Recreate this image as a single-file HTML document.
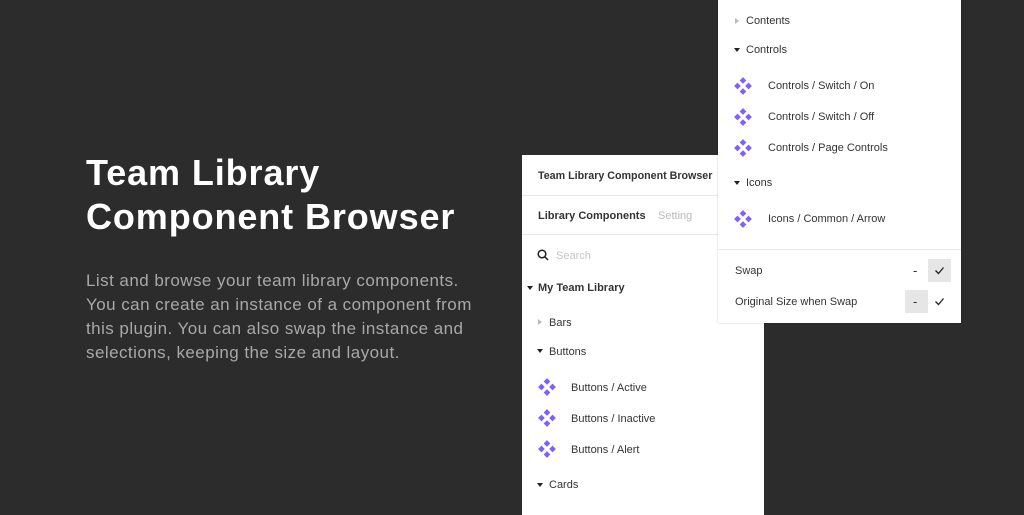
<!DOCTYPE html>
<html><head><meta charset="utf-8"><style>
*{margin:0;padding:0;box-sizing:border-box}
body{width:1024px;height:512px;background:#2c2c2c;font-family:"Liberation Sans",sans-serif;position:relative;overflow:hidden}
.t{position:absolute;left:86px;top:151px;color:#fff;font-size:36px;font-weight:bold;line-height:44px;letter-spacing:0.9px}
.d{position:absolute;left:86px;top:269px;color:#a8a8a8;font-size:17px;line-height:24px;white-space:nowrap;letter-spacing:0.45px}
.p{position:absolute;background:#fff;font-size:11px;color:#333}
.a{position:absolute;white-space:nowrap}
.sep{position:absolute;left:0;right:0;height:1px;background:#e8e8e8}
.tri{position:absolute;width:0;height:0}
.down{border-left:3.5px solid transparent;border-right:3.5px solid transparent;border-top:4px solid #222}
.right{border-top:3.5px solid transparent;border-bottom:3.5px solid transparent;border-left:4px solid #bbb}
.ic{position:absolute;width:20px;height:20px}
</style></head><body>
<div class="t">Team Library<br>Component Browser</div>
<div class="d">List and browse your team library components.<br>You can create an instance of a component from<br>this plugin. You can also swap the instance and<br>selections, keeping the size and layout.</div>

<div class="p" style="left:522px;top:155px;width:242px;height:360px">
<div class="a" style="left:16px;top:15px;font-weight:bold;color:#333;font-size:10.7px">Team Library Component Browser</div>
<div class="sep" style="top:40px"></div>
<div class="a" style="left:16px;top:55px;font-weight:bold;color:#333">Library Components</div>
<div class="a" style="left:136px;top:55px;color:#bbb">Setting</div>
<div class="sep" style="top:79px"></div>
<svg class="a" style="left:15px;top:94px" width="12" height="12" viewBox="0 0 12 12"><circle cx="5" cy="5" r="3.8" fill="none" stroke="#222" stroke-width="1.5"/><path d="M8 8l3 3" stroke="#222" stroke-width="1.5"/></svg>
<div class="a" style="left:34px;top:95px;color:#c4c4c4">Search</div>
<div class="tri down" style="left:5px;top:131px"></div>
<div class="a" style="left:16px;top:127px;font-weight:bold;color:#333">My Team Library</div>
<div class="tri right" style="left:16px;top:164px"></div>
<div class="a" style="left:27px;top:162px">Bars</div>
<div class="tri down" style="left:15px;top:194px"></div>
<div class="a" style="left:27px;top:191px">Buttons</div>
<svg class="ic" style="left:15px;top:222px" viewBox="0 0 18 18"><g fill="#7b61ff"><path d="M9 1l3 3-3 3-3-3z"/><path d="M9 11l3 3-3 3-3-3z"/><path d="M4 6l3 3-3 3-3-3z"/><path d="M14 6l3 3-3 3-3-3z"/></g></svg>
<div class="a" style="left:49px;top:227px">Buttons / Active</div>
<svg class="ic" style="left:15px;top:253px" viewBox="0 0 18 18"><g fill="#7b61ff"><path d="M9 1l3 3-3 3-3-3z"/><path d="M9 11l3 3-3 3-3-3z"/><path d="M4 6l3 3-3 3-3-3z"/><path d="M14 6l3 3-3 3-3-3z"/></g></svg>
<div class="a" style="left:49px;top:258px">Buttons / Inactive</div>
<svg class="ic" style="left:15px;top:284px" viewBox="0 0 18 18"><g fill="#7b61ff"><path d="M9 1l3 3-3 3-3-3z"/><path d="M9 11l3 3-3 3-3-3z"/><path d="M4 6l3 3-3 3-3-3z"/><path d="M14 6l3 3-3 3-3-3z"/></g></svg>
<div class="a" style="left:49px;top:289px">Buttons / Alert</div>
<div class="tri down" style="left:15px;top:328px"></div>
<div class="a" style="left:27px;top:324px">Cards</div>
</div>

<div class="p" style="left:718px;top:-2px;width:243px;height:325px;box-shadow:0 0 2px rgba(0,0,0,.2)">
<div class="tri right" style="left:17px;top:20px"></div>
<div class="a" style="left:28px;top:17px">Contents</div>
<div class="tri down" style="left:16px;top:50px"></div>
<div class="a" style="left:28px;top:46px">Controls</div>
<svg class="ic" style="left:15px;top:78px" viewBox="0 0 18 18"><g fill="#7b61ff"><path d="M9 1l3 3-3 3-3-3z"/><path d="M9 11l3 3-3 3-3-3z"/><path d="M4 6l3 3-3 3-3-3z"/><path d="M14 6l3 3-3 3-3-3z"/></g></svg>
<div class="a" style="left:50px;top:82px">Controls / Switch / On</div>
<svg class="ic" style="left:15px;top:109px" viewBox="0 0 18 18"><g fill="#7b61ff"><path d="M9 1l3 3-3 3-3-3z"/><path d="M9 11l3 3-3 3-3-3z"/><path d="M4 6l3 3-3 3-3-3z"/><path d="M14 6l3 3-3 3-3-3z"/></g></svg>
<div class="a" style="left:50px;top:113px">Controls / Switch / Off</div>
<svg class="ic" style="left:15px;top:140px" viewBox="0 0 18 18"><g fill="#7b61ff"><path d="M9 1l3 3-3 3-3-3z"/><path d="M9 11l3 3-3 3-3-3z"/><path d="M4 6l3 3-3 3-3-3z"/><path d="M14 6l3 3-3 3-3-3z"/></g></svg>
<div class="a" style="left:50px;top:144px">Controls / Page Controls</div>
<div class="tri down" style="left:16px;top:183px"></div>
<div class="a" style="left:28px;top:179px">Icons</div>
<svg class="ic" style="left:15px;top:211px" viewBox="0 0 18 18"><g fill="#7b61ff"><path d="M9 1l3 3-3 3-3-3z"/><path d="M9 11l3 3-3 3-3-3z"/><path d="M4 6l3 3-3 3-3-3z"/><path d="M14 6l3 3-3 3-3-3z"/></g></svg>
<div class="a" style="left:50px;top:215px">Icons / Common / Arrow</div>
<div class="sep" style="top:251px"></div>
<div class="a" style="left:17px;top:267px">Swap</div>
<div class="a" style="left:195px;top:265px;font-size:13px">-</div>
<div class="a" style="left:210px;top:261px;width:23px;height:23px;background:#e6e6e6"></div>
<svg class="a" style="left:216px;top:268px" width="11" height="9" viewBox="0 0 11 9"><path d="M1.5 4.5l3 3 5-6" fill="none" stroke="#222" stroke-width="1.3"/></svg>
<div class="a" style="left:17px;top:298px">Original Size when Swap</div>
<div class="a" style="left:187px;top:292px;width:23px;height:23px;background:#e6e6e6"></div>
<div class="a" style="left:195px;top:296px;font-size:13px">-</div>
<svg class="a" style="left:216px;top:299px" width="11" height="9" viewBox="0 0 11 9"><path d="M1.5 4.5l3 3 5-6" fill="none" stroke="#222" stroke-width="1.3"/></svg>
</div>
</body></html>
